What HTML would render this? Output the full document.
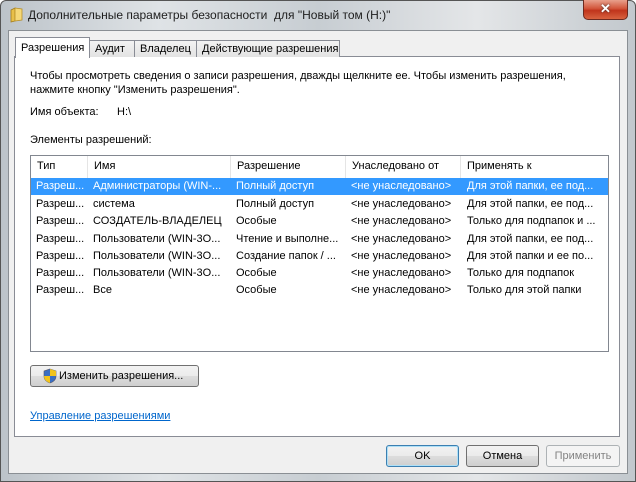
<!DOCTYPE html>
<html><head><meta charset="utf-8"><style>
*{margin:0;padding:0;box-sizing:border-box}
body{width:636px;height:482px;overflow:hidden;font-family:"Liberation Sans",sans-serif;font-size:11px;color:#000;position:relative;background:#fff;white-space:nowrap}
.a{position:absolute;white-space:nowrap}
#frame{position:absolute;left:0;top:0;width:636px;height:482px;border:1px solid #555;border-radius:6px 6px 0 0;background:linear-gradient(90deg,#bcc3c9 0%,#dfe3e6 25%,#c7cdd2 50%,#e4e6e8 75%,#c2c8cd 100%)}
#client{position:absolute;left:8px;top:30px;width:620px;height:444px;background:#f0f0f0;border:1px solid #8a8f94}
#panel{position:absolute;left:14px;top:56px;width:606px;height:381px;background:#fff;border:1px solid #898c95}
.tab{position:absolute;top:40px;height:17px;border:1px solid #898c95;border-bottom:none;background:linear-gradient(#f3f3f3,#e3e3e3);padding:2px 0 0 5px;font-size:11px}
.btn{position:absolute;height:22px;border:1px solid #707070;border-radius:3px;background:linear-gradient(#f2f2f2 0%,#ebebeb 50%,#dddddd 51%,#cfcfcf 100%);text-align:center;line-height:20px}
#lv{position:absolute;left:30px;top:155px;width:579px;height:197px;border:1px solid #828790;background:#fff}
.hd{position:absolute;top:0;height:22px;line-height:20px;padding-left:6px;border-right:1px solid #e5e5e5;background:#fff}
.row{position:absolute;left:0;width:577px;height:17px;line-height:16px}
.row span{position:absolute;top:0;overflow:hidden}
.sel{background:#3399ff;color:#fff}
</style></head><body>
<div id="frame"></div>
<svg class="a" style="left:10px;top:7px" width="14" height="16" viewBox="0 0 14 16"><path d="M1 3 L5 1 L5 14 L1 15Z" fill="#e8c04a" stroke="#a07b1c" stroke-width=".8"/><path d="M5 1 L12 2 L12 13 L5 14Z" fill="#f5d878" stroke="#b8902a" stroke-width=".8"/></svg>
<div class="a" style="left:28px;top:8px;font-size:12px;color:#1e1e1e">Дополнительные параметры безопасности&nbsp; для "Новый том (H:)"</div>
<div class="a" style="left:583px;top:0;width:45px;height:20px;border:1px solid #6d2a20;border-top:none;border-radius:0 0 5px 5px;background:linear-gradient(#e8a08c,#d2553a 45%,#c0341c 55%,#d8623f);color:#fff;font-weight:bold;text-align:center;line-height:18px;font-size:13px;text-shadow:0 0 2px #333">✕</div>
<div id="client"></div>
<div id="panel"></div>
<div class="tab" style="left:89px;width:46px">Аудит</div>
<div class="tab" style="left:134px;width:63px">Владелец</div>
<div class="tab" style="left:196px;width:144px">Действующие разрешения</div>
<div class="tab" style="left:15px;top:37px;height:21px;width:75px;background:#fff;padding-top:4px">Разрешения</div>
<div class="a" style="left:30px;top:69px;line-height:14px">Чтобы просмотреть сведения о записи разрешения, дважды щелкните ее. Чтобы изменить разрешения,<br>нажмите кнопку "Изменить разрешения".</div>
<div class="a" style="left:30px;top:106px">Имя объекта:</div>
<div class="a" style="left:117px;top:106px">H:\</div>
<div class="a" style="left:30px;top:134px">Элементы разрешений:</div>
<div id="lv">
<div class="hd" style="left:0;width:57px">Тип</div>
<div class="hd" style="left:57px;width:143px">Имя</div>
<div class="hd" style="left:200px;width:115px">Разрешение</div>
<div class="hd" style="left:315px;width:115px">Унаследовано от</div>
<div class="hd" style="left:430px;width:137px;border-right:none">Применять к</div>
<div class="row sel" style="top:22px"><span style="left:5px">Разреш...</span><span style="left:62px">Администраторы (WIN-...</span><span style="left:205px">Полный доступ</span><span style="left:320px">&lt;не унаследовано&gt;</span><span style="left:436px">Для этой папки, ее под...</span></div>
<div class="row" style="top:40px"><span style="left:5px">Разреш...</span><span style="left:62px">система</span><span style="left:205px">Полный доступ</span><span style="left:320px">&lt;не унаследовано&gt;</span><span style="left:436px">Для этой папки, ее под...</span></div>
<div class="row" style="top:57px"><span style="left:5px">Разреш...</span><span style="left:62px">СОЗДАТЕЛЬ-ВЛАДЕЛЕЦ</span><span style="left:205px">Особые</span><span style="left:320px">&lt;не унаследовано&gt;</span><span style="left:436px">Только для подпапок и ...</span></div>
<div class="row" style="top:75px"><span style="left:5px">Разреш...</span><span style="left:62px">Пользователи (WIN-3O...</span><span style="left:205px;width:108px">Чтение и выполне...</span><span style="left:320px">&lt;не унаследовано&gt;</span><span style="left:436px">Для этой папки, ее под...</span></div>
<div class="row" style="top:92px"><span style="left:5px">Разреш...</span><span style="left:62px">Пользователи (WIN-3O...</span><span style="left:205px;width:108px">Создание папок / ...</span><span style="left:320px">&lt;не унаследовано&gt;</span><span style="left:436px">Для этой папки и ее по...</span></div>
<div class="row" style="top:109px"><span style="left:5px">Разреш...</span><span style="left:62px">Пользователи (WIN-3O...</span><span style="left:205px">Особые</span><span style="left:320px">&lt;не унаследовано&gt;</span><span style="left:436px">Только для подпапок</span></div>
<div class="row" style="top:126px"><span style="left:5px">Разреш...</span><span style="left:62px">Все</span><span style="left:205px">Особые</span><span style="left:320px">&lt;не унаследовано&gt;</span><span style="left:436px">Только для этой папки</span></div>
</div>
<div class="btn" style="left:30px;top:365px;width:169px;text-align:left;padding-left:28px">Изменить разрешения...</div>
<svg class="a" style="left:43px;top:368px" width="14" height="16" viewBox="0 0 14 16"><path d="M7 1 L13 3 L13 8 Q13 13 7 15 Q1 13 1 8 L1 3Z" fill="#3a6fc4" stroke="#556" stroke-width=".6"/><path d="M7 1 L13 3 L13 8 L7 8Z" fill="#f2c41c"/><path d="M1 8 L7 8 L7 15 Q1 13 1 8Z" fill="#f2c41c"/></svg>
<div class="a" style="left:30px;top:410px;color:#0066cc;text-decoration:underline">Управление разрешениями</div>
<div class="btn" style="left:386px;top:445px;width:73px;border-color:#3c7fb1;box-shadow:inset 0 0 0 1px #aee0f7">OK</div>
<div class="btn" style="left:466px;top:445px;width:73px">Отмена</div>
<div class="btn" style="left:546px;top:445px;width:74px;background:#f4f4f4;border-color:#adb2b5;color:#838383">Применить</div>
</body></html>
